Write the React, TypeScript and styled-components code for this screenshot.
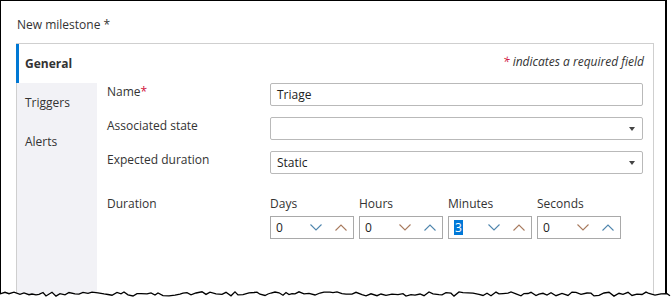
import React from "react";
import styled, { createGlobalStyle } from "styled-components";

const GlobalStyle = createGlobalStyle`
  html, body {
    margin: 0;
    padding: 0;
    background: #ffffff;
  }
  body {
    font-family: "Open Sans", "Noto Sans", Arial, sans-serif;
    color: #333333;
  }
`;

const Page = styled.div`
  position: relative;
  width: 671px;
  height: 301px;
  overflow: hidden;
`;

const Frame = styled.div`
  box-sizing: border-box;
  width: 667px;
  height: 301px;
  border-left: 1px solid #000;
  border-top: 1px solid #000;
  border-right: 2px solid #000;
  padding: 15px 0 0 15px;
`;

const Title = styled.div`
  font-size: 12px;
  line-height: 17px;
  margin: 0 0 10px 1px;
  color: #333;
`;

const Panel = styled.div`
  box-sizing: border-box;
  width: 638px;
  height: 260px;
  border: 1px solid #cfcfcf;
  display: grid;
  grid-template-columns: 80px 1fr;
`;

const Sidebar = styled.nav`
  display: flex;
  flex-direction: column;
  background: #f2f2f6;
`;

const Tab = styled.div<{ $active?: boolean }>`
  box-sizing: border-box;
  height: 39px;
  display: flex;
  align-items: center;
  font-size: 12px;
  color: #333;
  ${(p) =>
    p.$active
      ? `
    margin-left: -1px;
    width: 81px;
    border-left: 3px solid #0078d4;
    padding-left: 6px;
    background: #fff;
    font-weight: 700;
  `
      : `
    padding-left: 8px;
  `}
`;

const Content = styled.div`
  padding: 10px 10px 0 10px;
`;

const Note = styled.div`
  text-align: right;
  font-size: 12px;
  line-height: 16px;
  font-style: italic;
  color: #333;
  margin-right: -1px;
`;

const Star = styled.span`
  color: #d0103a;
`;

const Form = styled.div`
  margin-top: 13px;
  display: grid;
  grid-template-columns: 163px 1fr;
  row-gap: 11px;
  align-items: start;
`;

const Label = styled.div`
  font-size: 12px;
  line-height: 17px;
  color: #333;
`;

const Field = styled.div`
  box-sizing: border-box;
  position: relative;
  height: 23px;
  border: 1px solid #b9b9b9;
  border-radius: 2px;
  display: flex;
  align-items: center;
  padding-left: 6px;
  font-size: 12px;
  color: #222;
`;

const Caret = styled.span`
  position: absolute;
  right: 7px;
  top: 9px;
  width: 0;
  height: 0;
  border-left: 3.5px solid transparent;
  border-right: 3.5px solid transparent;
  border-top: 4px solid #444;
`;

const DurationRow = styled.div`
  grid-column: 1 / -1;
  display: grid;
  grid-template-columns: 163px 1fr;
  padding-top: 10px;
`;

const Spinners = styled.div`
  display: flex;
  gap: 5px;
`;

const SpinGroup = styled.div`
  display: flex;
  flex-direction: column;
  gap: 4px;
`;

const SpinBox = styled.div`
  box-sizing: border-box;
  width: 84px;
  height: 23px;
  border: 1px solid #a9a9a9;
  display: flex;
  align-items: center;
  padding-left: 5px;
  font-size: 12px;
  color: #222;
`;

const SpinValue = styled.span<{ $selected?: boolean }>`
  flex: 1;
  line-height: 15px;
  ${(p) =>
    p.$selected
      ? `
    flex: none;
    background: #0078d7;
    color: #fff;
    padding: 0 1px;
    margin-right: auto;
  `
      : ""}
`;

const Arrows = styled.div`
  display: flex;
  gap: 13px;
  margin-right: 6px;
  margin-left: auto;
`;

const BLUE = "#4f86ad";
const BROWN = "#a87a5e";

const Chevron = ({ up, color }: { up?: boolean; color: string }) => (
  <svg width="12" height="7" viewBox="0 0 12 7">
    <polyline
      points={up ? "0.5,6.5 6,1 11.5,6.5" : "0.5,0.5 6,6 11.5,0.5"}
      fill="none"
      stroke={color}
      strokeWidth="1.1"
    />
  </svg>
);

const Tear = styled.svg`
  position: absolute;
  left: 0;
  top: 286px;
`;

function tearPath() {
  let seed = 7;
  const rnd = () => {
    seed = (seed * 9301 + 49297) % 233280;
    return seed / 233280;
  };
  const pts: string[] = [];
  for (let x = 0; x <= 672; x += 3 + Math.round(rnd() * 3)) {
    const y = 8 + (rnd() - 0.5) * 4.5;
    pts.push(`${x},${y.toFixed(1)}`);
  }
  return pts;
}

const spinners = [
  { label: "Days", value: "0", down: BLUE, up: BROWN },
  { label: "Hours", value: "0", down: BROWN, up: BLUE },
  { label: "Minutes", value: "3", selected: true, down: BLUE, up: BROWN },
  { label: "Seconds", value: "0", down: BROWN, up: BLUE },
];

export default function App() {
  const pts = tearPath();
  return (
    <Page>
      <GlobalStyle />
      <Frame>
        <Title>New milestone *</Title>
        <Panel>
          <Sidebar>
            <Tab $active>General</Tab>
            <Tab>Triggers</Tab>
            <Tab>Alerts</Tab>
          </Sidebar>
          <Content>
            <Note>
              <Star>*</Star> indicates a required field
            </Note>
            <Form>
              <Label>
                Name<Star>*</Star>
              </Label>
              <Field>Triage</Field>
              <Label>Associated state</Label>
              <Field>
                <Caret />
              </Field>
              <Label>Expected duration</Label>
              <Field>
                Static
                <Caret />
              </Field>
              <DurationRow>
                <Label>Duration</Label>
                <Spinners>
                  {spinners.map((s) => (
                    <SpinGroup key={s.label}>
                      <Label>{s.label}</Label>
                      <SpinBox>
                        <SpinValue $selected={s.selected}>{s.value}</SpinValue>
                        <Arrows>
                          <Chevron color={s.down} />
                          <Chevron up color={s.up} />
                        </Arrows>
                      </SpinBox>
                    </SpinGroup>
                  ))}
                </Spinners>
              </DurationRow>
            </Form>
          </Content>
        </Panel>
      </Frame>
      <Tear width="671" height="15" viewBox="0 0 671 15">
        <path d={`M${pts.join(" L")} L671,15 L0,15 Z`} fill="#fff" />
        <polyline points={pts.join(" ")} fill="none" stroke="#000" strokeWidth="1.3" />
      </Tear>
    </Page>
  );
}
